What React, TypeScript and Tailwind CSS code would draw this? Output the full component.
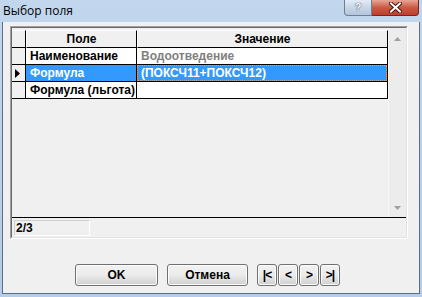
const font = { fontFamily: '"Liberation Sans", Arial, sans-serif' };

const WinButton = ({ className, children }: { className: string; children: React.ReactNode }) => (
  <button
    className={`h-[22px] rounded-[3px] border border-[#707070] bg-gradient-to-b from-[#f2f2f2] via-[#ebebeb] to-[#cfcfcf] text-[12px] font-bold text-black flex items-center justify-center shadow-[inset_0_0_0_1px_#fcfcfc] ${className}`}
  >
    {children}
  </button>
);

const NavButton = ({ children }: { children: React.ReactNode }) => (
  <WinButton className="w-[20px] text-[#10104a] tracking-[-1px]">{children}</WinButton>
);

export default function App() {
  return (
    <div
      className="w-[422px] h-[297px] bg-gradient-to-b from-[#c2d7ee] via-[#b9d1ea] to-[#b4cde8] flex flex-col overflow-hidden"
      style={font}
    >
      {/* Title bar */}
      <div className="h-[22px] flex items-start">
        <div
          className="pl-[3px] pt-[3px] text-[12px] text-black leading-[16px] flex-1"
          style={{ fontFamily: '"Open Sans", "Noto Sans", sans-serif' }}
        >
          Выбор поля
        </div>
        <div className="flex mr-[3px]">
          <div className="w-[28px] h-[16px] rounded-bl-[4px] border border-[#6d7f97] border-t-0 bg-gradient-to-b from-[#e3ebf5] via-[#c9d6e6] to-[#b3c5dc] flex items-center justify-center text-[11px] font-bold text-white [text-shadow:0_0_1px_#34475f,0_0_1px_#34475f]">
            ?
          </div>
          <div className="w-[47px] h-[16px] rounded-br-[4px] border border-[#6b2a22] border-t-0 border-l-0 bg-gradient-to-b from-[#e7a597] via-[#c95a45] to-[#c03c28] flex items-center justify-center">
            <svg width="13" height="11" viewBox="0 0 13 11">
              <path d="M2 1.5 L11 9.5 M11 1.5 L2 9.5" stroke="#4a1410" strokeWidth="4" strokeLinecap="square" />
              <path d="M2 1.5 L11 9.5 M11 1.5 L2 9.5" stroke="#ffffff" strokeWidth="2" strokeLinecap="square" />
            </svg>
          </div>
        </div>
      </div>

      {/* Client area */}
      <div className="ml-[2px] w-[418px] h-[272px] border border-t-0 border-[#5d6f87] bg-[#f0f0f0] pl-[7px] pt-[4px] flex flex-col">
        {/* Grid panel */}
        <div className="w-[398px] h-[213px] border border-[#a0a0a0] border-r-white border-b-white flex flex-col">
          <div className="flex-1 flex flex-col border border-[#696969] border-r-[#e3e3e3] border-b-[#e3e3e3] pt-[2px]">
            <div className="flex h-[188px] border-b border-black">
              {/* Data area */}
              <div className="w-[376px] flex flex-col">
                {/* Header */}
                <div className="flex h-[18px] text-[12px] font-bold text-black">
                  <div className="w-[14px] border-r border-b border-black bg-[#f0f0f0] border-t border-t-white" />
                  <div className="w-[111px] border-r border-b border-black bg-[#f0f0f0] border-t border-t-white border-l border-l-white flex items-center justify-center">
                    Поле
                  </div>
                  <div className="w-[251px] border-r border-b border-black bg-[#f0f0f0] border-t border-t-white border-l border-l-white flex items-center justify-center">
                    Значение
                  </div>
                </div>
                {/* Row 1 */}
                <div className="flex h-[17px] text-[12px] font-bold">
                  <div className="w-[14px] border-r border-b border-black bg-[#f0f0f0]" />
                  <div className="w-[111px] border-r border-b border-black bg-white text-black pl-[4px] flex items-center">
                    Наименование
                  </div>
                  <div className="w-[251px] border-r border-b border-black bg-white text-[#808080] pl-[4px] flex items-center">
                    Водоотведение
                  </div>
                </div>
                {/* Row 2 selected */}
                <div className="flex h-[17px] text-[12px] font-bold">
                  <div className="w-[14px] border-r border-b border-black bg-[#f0f0f0] flex items-center pl-[3px]">
                    <svg width="5" height="9" viewBox="0 0 5 9">
                      <path d="M0 0 L5 4.5 L0 9 Z" fill="#000" />
                    </svg>
                  </div>
                  <div className="w-[111px] border-r border-b border-black bg-[#3399ff] text-white pl-[4px] flex items-center">
                    Формула
                  </div>
                  <div className="w-[251px] border-r border-b border-black bg-[#3399ff] text-white flex">
                    <div className="flex-1 border border-dotted border-[#ff9a33] pl-[3px] flex items-center">
                      (ПОКСЧ11+ПОКСЧ12)
                    </div>
                  </div>
                </div>
                {/* Row 3 */}
                <div className="flex h-[17px] text-[12px] font-bold">
                  <div className="w-[14px] border-r border-b border-black bg-[#f0f0f0]" />
                  <div className="w-[111px] border-r border-b border-black bg-white text-black pl-[4px] flex items-center">
                    Формула (льгота)
                  </div>
                  <div className="w-[251px] border-r border-b border-black bg-white" />
                </div>
                <div className="flex-1 bg-[#f0f0f0]" />
              </div>
              {/* Scrollbar */}
              <div className="w-[18px] -mt-[2px] bg-[#ececec] border-l border-[#f7f7f7] flex flex-col items-center justify-between pt-[9px] pb-[7px]">
                <svg width="7" height="4" viewBox="0 0 7 4">
                  <path d="M0 4 L3.5 0 L7 4 Z" fill="#a0a0a0" />
                </svg>
                <svg width="7" height="4" viewBox="0 0 7 4">
                  <path d="M0 0 L7 0 L3.5 4 Z" fill="#a0a0a0" />
                </svg>
              </div>
            </div>
            {/* Status area */}
            <div className="flex-1 flex items-center pl-[2px]">
              <div className="w-[76px] h-[16px] border border-[#d0d0d0] border-r-white border-b-white flex items-center pl-[1px] text-[12px] font-bold text-black">
                2/3
              </div>
            </div>
          </div>
        </div>

        {/* Buttons */}
        <div className="flex mt-[25px] pl-[65px]">
          <WinButton className="w-[83px]">OK</WinButton>
          <WinButton className="w-[81px] ml-[9px]">Отмена</WinButton>
          <div className="flex gap-[1px] ml-[9px]">
            <NavButton>|&lt;</NavButton>
            <NavButton>&lt;</NavButton>
            <NavButton>&gt;</NavButton>
            <NavButton>&gt;|</NavButton>
          </div>
        </div>
      </div>
    </div>
  );
}
